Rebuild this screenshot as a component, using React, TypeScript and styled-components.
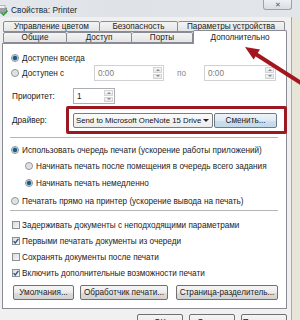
import styled, { createGlobalStyle } from "styled-components";

const GlobalStyle = createGlobalStyle`
  html, body { margin: 0; padding: 0; background: #ffffff; }
  body { font-family: "Liberation Sans", Arial, sans-serif; }
`;

const Window = styled.div`
  position: relative;
  width: 300px;
  height: 320px;
  overflow: hidden;
  display: flex;
  flex-direction: column;
  background: #f0f0f0;
  color: #1b1b1b;
  font-size: 8.2px;
`;

const TitleBar = styled.div`
  height: 17px;
  flex: none;
  display: flex;
  align-items: flex-start;
  background: linear-gradient(90deg, #e4e8ec 0%, #dfe3e8 40%, #e2e6ea 100%);
`;

const TitleIcon = styled.svg`
  margin: 5px 0 0 -3px;
  flex: none;
`;

const TitleText = styled.span`
  margin: 5px 0 0 3px;
  font-size: 8.4px;
  color: #1e2a36;
`;

const CloseButton = styled.div`
  margin-left: auto;
  margin-right: 8px;
  width: 27px;
  height: 9px;
  border: 1px solid #9aa2aa;
  border-top: none;
  border-radius: 0 0 3px 3px;
  background: linear-gradient(#eef1f4, #d9dee3);
  display: flex;
  justify-content: center;
  align-items: center;
  font-size: 7px;
  line-height: 7px;
  color: #505860;
`;

const Body = styled.div`
  flex: 1;
  display: flex;
`;

const Dialog = styled.div`
  width: 291px;
  flex: none;
  display: flex;
  flex-direction: column;
  padding-top: 4px;
  box-sizing: border-box;
`;

const Frame = styled.div`
  flex: 1;
  border-left: 1px solid #a9a9a9;
  background: #e7e4d8;
`;

const TabRow = styled.div`
  display: flex;
  align-items: flex-end;
  padding-left: 3px;
  height: 11px;
`;

const Tab = styled.div<{ $w: number; $active?: boolean }>`
  width: ${(p) => p.$w}px;
  height: ${(p) => (p.$active ? 14 : 11)}px;
  margin-bottom: ${(p) => (p.$active ? -1 : 0)}px;
  box-sizing: border-box;
  border: 1px solid #898c95;
  border-bottom: ${(p) => (p.$active ? "none" : "1px solid #898c95")};
  border-left: ${(p) => (p.$active ? "1px solid #898c95" : "none")};
  border-radius: 2px 2px 0 0;
  background: ${(p) =>
    p.$active ? "#ffffff" : "linear-gradient(#f4f4f4, #e4e4e4)"};
  display: flex;
  justify-content: center;
  align-items: ${(p) => (p.$active ? "flex-start" : "center")};
  padding-top: ${(p) => (p.$active ? 2 : 0)}px;
  line-height: 9px;
  white-space: nowrap;
  color: #1b1b1b;
  z-index: ${(p) => (p.$active ? 1 : 0)};
  &:first-child {
    border-left: 1px solid #898c95;
  }
`;

const Panel = styled.div`
  margin-left: 2px;
  width: 285px;
  height: 266px;
  box-sizing: border-box;
  border: 1px solid #898c95;
  background: #ffffff;
  padding: 7px 9px 0 9px;
  display: flex;
  flex-direction: column;
`;

const Row = styled.div<{ $h?: number; $top?: number; $indent?: number }>`
  display: flex;
  align-items: center;
  height: ${(p) => p.$h ?? 16}px;
  margin-top: ${(p) => p.$top ?? 0}px;
  padding-left: ${(p) => p.$indent ?? 0}px;
  white-space: nowrap;
`;

const RadioDot = styled.span<{ $on?: boolean }>`
  width: 8px;
  height: 8px;
  margin-left: -1px;
  margin-right: 3px;
  flex: none;
  box-sizing: border-box;
  border-radius: 50%;
  border: 1px solid #8a8f96;
  background: ${(p) =>
    p.$on
      ? "radial-gradient(circle, #1d5b86 0 1.8px, #7fb0d2 2.4px, #e9eef2 2.8px)"
      : "radial-gradient(circle, #d4d8dc, #f4f5f6)"};
`;

const CheckBox = styled.span<{ $on?: boolean }>`
  width: 8px;
  height: 8px;
  margin-right: 2px;
  flex: none;
  box-sizing: border-box;
  border: 1px solid #8e8f8f;
  background: linear-gradient(135deg, #d9dcdf, #f6f6f6);
  display: flex;
  align-items: center;
  justify-content: center;
`;

const Label = styled.span<{ $w?: number; $pad?: number; $muted?: boolean }>`
  display: inline-block;
  width: ${(p) => (p.$w ? `${p.$w}px` : "auto")};
  padding-left: ${(p) => p.$pad ?? 0}px;
  box-sizing: border-box;
  flex: none;
  color: ${(p) => (p.$muted ? "#8a8a8a" : "#1b1b1b")};
`;

const Spin = styled.div<{ $w: number; $disabled?: boolean }>`
  width: ${(p) => p.$w}px;
  height: 16px;
  box-sizing: border-box;
  flex: none;
  border: 1px solid ${(p) => (p.$disabled ? "#cfd1d5" : "#abadb3")};
  background: #ffffff;
  display: flex;
  align-items: stretch;
  color: ${(p) => (p.$disabled ? "#7b7b7b" : "#1b1b1b")};
`;

const SpinValue = styled.span`
  flex: 1;
  padding-left: 3px;
  display: flex;
  align-items: center;
`;

const SpinButtons = styled.div`
  width: 9px;
  display: flex;
  flex-direction: column;
  gap: 1px;
  padding: 1px 1px 1px 0;
`;

const SpinArrow = styled.div<{ $down?: boolean }>`
  flex: 1;
  border: 1px solid #d2d4d8;
  background: linear-gradient(#f6f6f6, #e6e6e6);
  display: flex;
  align-items: center;
  justify-content: center;
  &::after {
    content: "";
    border-left: 2px solid transparent;
    border-right: 2px solid transparent;
    ${(p) =>
      p.$down ? "border-top: 2px solid #8a8a8a;" : "border-bottom: 2px solid #8a8a8a;"}
  }
`;

const RedFrame = styled.div`
  margin-right: -10px;
  flex: 1;
  height: 28px;
  box-sizing: border-box;
  border: 3px solid #9b1a22;
  border-radius: 2px;
  display: flex;
  align-items: center;
  padding-left: 4px;
  gap: 1px;
`;

const Select = styled.div`
  width: 140px;
  height: 15px;
  box-sizing: border-box;
  border: 1px solid #7c7c7c;
  border-radius: 2px;
  background: linear-gradient(#fbfbfb, #ececec);
  display: flex;
  align-items: center;
  padding: 0 3px 0 2px;
  color: #111;
  font-size: 7.8px;
  white-space: nowrap;
  justify-content: space-between;
`;

const Caret = styled.span`
  border-left: 3px solid transparent;
  border-right: 3px solid transparent;
  border-top: 3px solid #222;
`;

const Button = styled.div<{ $w: number; $blue?: boolean; $h?: number }>`
  width: ${(p) => p.$w}px;
  height: ${(p) => p.$h ?? 15}px;
  box-sizing: border-box;
  flex: none;
  border: 1px solid ${(p) => (p.$blue ? "#6a7c8c" : "#707070")};
  border-radius: 2px;
  background: ${(p) =>
    p.$blue
      ? "linear-gradient(#eef5fa 0%, #dde9f3 50%, #cddfec 51%, #c4d8e7 100%)"
      : "linear-gradient(#f5f5f5 0%, #ebebeb 50%, #dcdcdc 51%, #d2d2d2 100%)"};
  display: flex;
  align-items: center;
  justify-content: center;
  white-space: nowrap;
  color: #1b1b1b;
`;

const Separator = styled.div<{ $top: number }>`
  height: 1px;
  margin: ${(p) => p.$top}px -1px 0 -2px;
  background: #b5b5b5;
  flex: none;
`;

const ButtonRow = styled.div`
  display: flex;
  gap: 6px;
  margin-top: 4px;
  padding-left: 1px;
  & > :last-child {
    margin-left: 2px;
  }
`;

const Footer = styled.div`
  display: flex;
  gap: 6px;
  padding: 5px 0 0 137px;
`;

const Overlay = styled.svg`
  position: absolute;
  left: 0;
  top: 0;
  pointer-events: none;
`;

function Check() {
  return (
    <svg width="6" height="6" viewBox="0 0 6 6">
      <path d="M0.6 3.2 L2.3 4.9 L5.4 0.8" fill="none" stroke="#2f4f86" strokeWidth="1.3" />
    </svg>
  );
}

function Spinner({ w, value, disabled }: { w: number; value: string; disabled?: boolean }) {
  return (
    <Spin $w={w} $disabled={disabled}>
      <SpinValue>{value}</SpinValue>
      <SpinButtons>
        <SpinArrow />
        <SpinArrow $down />
      </SpinButtons>
    </Spin>
  );
}

export default function App() {
  return (
    <>
      <GlobalStyle />
      <Window>
        <TitleBar>
          <TitleIcon width="11" height="11" viewBox="0 0 11 11">
            <rect x="0.5" y="3" width="9" height="5" fill="#9aa3ab" stroke="#5d656d" strokeWidth="0.6" />
            <rect x="2" y="0.5" width="6" height="3" fill="#f2f2f2" stroke="#7c848b" strokeWidth="0.5" />
            <path d="M4.5 8 L6.5 10 L10.5 5.5" fill="none" stroke="#2ea33a" strokeWidth="1.6" />
          </TitleIcon>
          <TitleText>Свойства: Printer</TitleText>
          <CloseButton>✕</CloseButton>
        </TitleBar>
        <Body>
          <Dialog>
            <TabRow>
              <Tab $w={97}>Управление цветом</Tab>
              <Tab $w={78}>Безопасность</Tab>
              <Tab $w={107}>Параметры устройства</Tab>
            </TabRow>
            <TabRow>
              <Tab $w={64}>Общие</Tab>
              <Tab $w={65}>Доступ</Tab>
              <Tab $w={61}>Порты</Tab>
              <Tab $w={94} $active>
                Дополнительно
              </Tab>
            </TabRow>
            <Panel>
              <Row $h={14}>
                <RadioDot $on />
                <Label>Доступен всегда</Label>
              </Row>
              <Row>
                <RadioDot />
                <Label $w={72}>Доступен с</Label>
                <Spinner w={70} value="0:00" disabled />
                <Label $w={40} $pad={13} $muted>
                  по
                </Label>
                <Spinner w={72} value="0:00" disabled />
              </Row>
              <Row $top={7}>
                <Label $w={61}>Приоритет:</Label>
                <Spinner w={42} value="1" />
              </Row>
              <Row $h={28} $top={2}>
                <Label $w={54}>Драйвер:</Label>
                <RedFrame>
                  <Select>
                    <span>Send to Microsoft OneNote 15 Drive</span>
                    <Caret />
                  </Select>
                  <Button $w={63} $blue>
                    Сменить...
                  </Button>
                </RedFrame>
              </Row>
              <Separator $top={3} />
              <Row $top={4}>
                <RadioDot $on />
                <Label>Использовать очередь печати (ускорение работы приложений)</Label>
              </Row>
              <Row $indent={14}>
                <RadioDot />
                <Label>Начинать печать после помещения в очередь всего задания</Label>
              </Row>
              <Row $indent={14} $top={1}>
                <RadioDot $on />
                <Label>Начинать печать немедленно</Label>
              </Row>
              <Row $top={2}>
                <RadioDot />
                <Label>Печатать прямо на принтер (ускорение вывода на печать)</Label>
              </Row>
              <Separator $top={1} />
              <Row $top={6}>
                <CheckBox />
                <Label>Задерживать документы с неподходящими параметрами</Label>
              </Row>
              <Row>
                <CheckBox $on>
                  <Check />
                </CheckBox>
                <Label>Первыми печатать документы из очереди</Label>
              </Row>
              <Row>
                <CheckBox />
                <Label>Сохранять документы после печати</Label>
              </Row>
              <Row>
                <CheckBox $on>
                  <Check />
                </CheckBox>
                <Label>Включить дополнительные возможности печати</Label>
              </Row>
              <ButtonRow>
                <Button $w={61}>Умолчания...</Button>
                <Button $w={88}>Обработчик печати...</Button>
                <Button $w={102}>Страница-разделитель...</Button>
              </ButtonRow>
            </Panel>
            <Footer>
              <Button $w={46} $h={16}>
                OK
              </Button>
              <Button $w={46} $h={16}>
                Отмена
              </Button>
              <Button $w={46} $h={16}>
                Применить
              </Button>
            </Footer>
          </Dialog>
          <Frame />
        </Body>
        <Overlay width="300" height="320" viewBox="0 0 300 320">
          <line x1="254" y1="53" x2="304" y2="85" stroke="#a3161e" strokeWidth="4" />
          <polygon points="245,47 253.6,59.6 260,49.4" fill="#a3161e" />
        </Overlay>
      </Window>
    </>
  );
}
